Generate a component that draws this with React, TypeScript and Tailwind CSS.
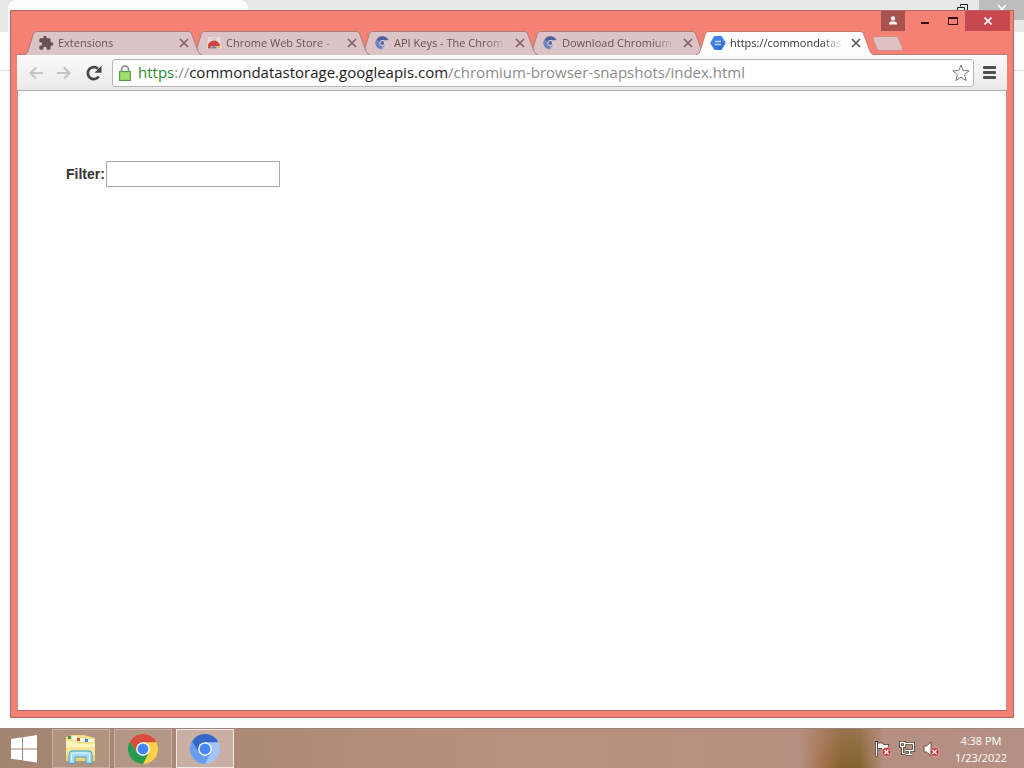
import { useState, type ReactNode } from 'react';
import { MdExtension } from 'react-icons/md';

type Tab = { title: string; icon: ReactNode };

function ExtensionIcon() {
  return <MdExtension size={16} className="text-[#695153]" />;
}

function StoreIcon() {
  return (
    <svg width="16" height="16" viewBox="0 0 16 16" aria-hidden="true">
      <path d="M2 2h12l1 12H1z" fill="#e8dcdc" />
      <path d="M5.500 3.500h5" stroke="#d2c2c3" strokeWidth="1.500" />
      <path d="M2 12a6 6 0 0 1 12-1L8 11z" fill="#d0443f" />
      <path d="M2 13.500q-.3-2.500.8-4L6 13.500z" fill="#c8503f" />
      <path d="M10 11h4v2.500h-4z" fill="#e9b94b" />
      <path d="M5.500 13.500a2.500 2.500 0 0 1 5 0z" fill="#5c7fd0" />
    </svg>
  );
}

function ChromiumTabIcon() {
  return (
    <svg width="16" height="16" viewBox="0 0 16 16" aria-hidden="true">
      <circle cx="8" cy="8" r="6.500" fill="#a9acd0" />
      <path d="M2.500 4.500A6.800 6.800 0 0 1 14.500 5H8.500a3 3 0 0 0-3 2.500z" fill="#535f9c" />
      <path d="M2.100 5A6.700 6.700 0 0 0 7 14.600L9 11a3 3 0 0 1-3.700-3z" fill="#7582b8" />
      <path d="M11 6h4.500v5.500l-4.500 3.500-1.500-.5 1.500-4z" fill="#dcc8cc" />
      <circle cx="8.200" cy="8" r="2.500" fill="#5d6cae" stroke="#dcd0dc" />
    </svg>
  );
}

function StorageIcon() {
  return (
    <svg width="16" height="16" viewBox="0 0 16 16" aria-hidden="true">
      <path d="M4.500 1.500h7L15.300 8l-3.800 6.500h-7L.7 8z" fill="#3f80ec" stroke="#3f80ec" strokeLinejoin="round" />
      <path d="M11 6 14 9l-3 5.500H8l-3-4z" fill="#356fd3" />
      <path d="M5 6.500h6M5 9.500h6" stroke="#c5dafd" strokeWidth="1.500" />
    </svg>
  );
}

const tabs: Tab[] = [
  { title: 'Extensions', icon: <ExtensionIcon /> },
  { title: 'Chrome Web Store -', icon: <StoreIcon /> },
  { title: 'API Keys - The Chrom', icon: <ChromiumTabIcon /> },
  { title: 'Download Chromium', icon: <ChromiumTabIcon /> },
  { title: 'https://commondatas', icon: <StorageIcon /> },
];

const stacking = ['z-[5]', 'z-[4]', 'z-[3]', 'z-[2]', 'z-[1]'];

function TabStrip() {
  const [active, setActive] = useState(4);

  return (
    <div className="relative flex h-6 pl-[13px]">
      {tabs.map((tab, index) => {
        const isActive = index === active;
        return (
          <div
            key={tab.title}
            className={`relative -mr-[10px] flex h-6 w-[178px] shrink-0 items-center pr-[10px] pl-3 ${
              isActive ? 'z-10' : stacking[index]
            }`}
          >
            <svg
              className="absolute inset-0 h-full w-full"
              viewBox="0 0 178 24"
              preserveAspectRatio="none"
              aria-hidden="true"
            >
              <path
                d="M0 24C3 23 3 22 4 20L9 4C10 1 11 .5 13 .5H164C166 .5 167 1 168 4L174 20C175 22 175 23 178 24Z"
                fill={isActive ? '#fdfdfd' : '#dcc3c5'}
              />
              <path
                d="M0 23.500C3 23 3 22 4 20L9 4C10 1 11 .5 13 .5H164C166 .5 167 1 168 4L174 20C175 22 175 23 178 23.500"
                fill="none"
                stroke={isActive ? '#c87469' : '#ab7d7b'}
              />
            </svg>
            <button
              type="button"
              onClick={() => setActive(index)}
              className="relative flex min-w-0 flex-1 items-center gap-1 pl-0.5"
            >
              {tab.icon}
              <span
                className={`min-w-0 flex-1 text-left text-[11px] leading-4 whitespace-nowrap [mask-image:linear-gradient(to_right,black_80%,transparent)] ${
                  isActive ? 'text-[#333]' : 'text-[#695153]'
                }`}
              >
                {tab.title}
              </span>
            </button>
            <button
              type="button"
              aria-label={`Close ${tab.title}`}
              className="relative ml-1 flex h-4 w-4 items-center justify-center"
            >
              <svg width="10" height="10" viewBox="0 0 10 10" aria-hidden="true">
                <path d="m1 1 8 8M9 1 1 9" stroke={isActive ? '#555' : '#806365'} strokeWidth="1.600" />
              </svg>
            </button>
          </div>
        );
      })}
      {/* New tab */}
      <button type="button" aria-label="New tab" className="ml-2 h-6 w-8">
        <svg width="32" height="24" viewBox="0 0 32 24" aria-hidden="true">
          <path
            d="M3 5.500H24c2 0 2.500 1 3 2.500l3.500 9c.6 2-.2 2.500-2 2.500H8c-2 0-3-1-3.500-2.500L1 8c-.5-1.500.3-2.500 2-2.500z"
            fill="#dcc1c0"
            stroke="#d98a81"
          />
        </svg>
      </button>
      <div className="absolute inset-x-1 bottom-0 h-px bg-[#b97a73]" />
    </div>
  );
}

function WindowControls() {
  return (
    <div className="flex h-5 justify-end pr-[3px]">
      <button type="button" aria-label="Profile" className="flex w-6 items-center justify-center bg-[#a95350]">
        <svg width="10" height="10" viewBox="0 0 10 10" fill="#fff5ea" aria-hidden="true">
          <circle cx="5" cy="2.500" r="2.200" />
          <path d="M1 8.500V7.500Q1 6 3 5.500h4q2 .5 2 2v1z" />
        </svg>
      </button>
      <button type="button" aria-label="Minimize" className="ml-1 flex w-8 items-center justify-center">
        <span className="mt-1 h-[2px] w-2 bg-[#34100e]" />
      </button>
      <button type="button" aria-label="Maximize" className="flex w-6 items-center justify-center">
        <span className="h-2 w-[10px] border border-t-2 border-[#34100e]" />
      </button>
      <button type="button" aria-label="Close" className="flex w-[45px] items-center justify-center bg-[#c84850]">
        <svg width="8" height="8" viewBox="0 0 8 8" aria-hidden="true">
          <path d="m.5.5 7 7M7.500.5l-7 7" stroke="#fff" strokeWidth="1.600" />
        </svg>
      </button>
    </div>
  );
}

function Toolbar() {
  return (
    <div className="flex h-9 items-center border-b border-[#adadad] bg-gradient-to-b from-[#fbfbfb] to-[#e9e9e9] px-[10px]">
      <button type="button" aria-label="Back" className="flex h-6 w-[18px] items-center justify-center">
        <svg width="16" height="14" viewBox="0 0 16 14" fill="none" stroke="#c5c5c5" strokeWidth="2.200" aria-hidden="true">
          <path d="M8 1.500 2.500 7 8 12.500M2.500 7H15" />
        </svg>
      </button>
      <button type="button" aria-label="Forward" className="ml-[10px] flex h-6 w-[18px] items-center justify-center">
        <svg width="16" height="14" viewBox="0 0 16 14" fill="none" stroke="#c5c5c5" strokeWidth="2.200" aria-hidden="true">
          <path d="M8 1.500 13.500 7 8 12.500M13.500 7H1" />
        </svg>
      </button>
      <button type="button" aria-label="Reload" className="ml-3 flex h-6 w-[18px] items-center justify-center">
        <svg width="16" height="16" viewBox="0 0 16 16" aria-hidden="true">
          <path d="M12.800 11.500A6 6 0 1 1 12 3.800" fill="none" stroke="#444" strokeWidth="2.600" />
          <path d="M15.500.8v7H8.600z" fill="#444" />
        </svg>
      </button>
      <div className="ml-[9px] flex h-7 min-w-0 flex-1 items-center rounded-[3px] border border-[#b5b5b5] bg-white pr-[3px] pl-[6px]">
        <svg width="12" height="16" viewBox="0 0 12 16" className="shrink-0" aria-hidden="true">
          <path d="M2.500 8V4.500a3.500 3.500 0 0 1 7 0V8" fill="none" stroke="#808780" strokeWidth="1.600" />
          <rect x=".5" y="6.500" width="11" height="9" fill="#8fd45f" stroke="#5a9c44" />
          <path d="M2 9h8M2 11h8M2 13h8" stroke="#b8ea91" strokeWidth=".8" />
        </svg>
        <div className="ml-[7px] min-w-0 flex-1 overflow-hidden pb-px text-[15px] leading-5 whitespace-nowrap text-[#8b8b8b]">
          <span className="text-[#2b8b2b]">https</span>://
          <span className="text-[#1d1d1d]">commondatastorage.googleapis.com</span>
          /chromium-browser-snapshots/index.html
        </div>
        <button type="button" aria-label="Bookmark this page" className="shrink-0">
          <svg width="18" height="18" viewBox="0 0 18 18" aria-hidden="true">
            <path
              d="m9 1 2.200 5.500 6 .4-4.600 3.800 1.500 5.800L9 13.300l-5.100 3.200 1.500-5.800L.8 6.900l6-.4z"
              fill="#fff"
              stroke="#777"
              strokeLinejoin="round"
            />
          </svg>
        </button>
      </div>
      <button type="button" aria-label="Menu" className="ml-[7px] flex h-6 w-4 flex-col items-center justify-center gap-[2px]">
        <span className="h-[3px] w-[13px] rounded-[1px] bg-[#505050]" />
        <span className="h-[3px] w-[13px] rounded-[1px] bg-[#505050]" />
        <span className="h-[3px] w-[13px] rounded-[1px] bg-[#505050]" />
      </button>
    </div>
  );
}

function BrowserWindow() {
  const [filter, setFilter] = useState('');

  return (
    <div className="relative flex flex-1 flex-col border border-[#ad6660] bg-[#f58175]">
      <WindowControls />
      <TabStrip />
      <div className="mx-[6px] mb-[6px] flex flex-1 flex-col border-b border-[#a9665f] bg-white">
        <Toolbar />
        <main className="flex-1 border-x border-[#c98d86] px-12 pt-[70px]">
          <form className="flex items-center gap-px" onSubmit={(e) => e.preventDefault()}>
            <label
              htmlFor="filter"
              className="font-['Liberation_Sans',Arial,sans-serif] text-[14px] leading-5 font-bold text-[#333]"
            >
              Filter:
            </label>
            <input
              id="filter"
              type="text"
              value={filter}
              onChange={(e) => setFilter(e.target.value)}
              className="h-[26px] w-[174px] border border-[#a9a9a9] bg-white px-1 text-[14px] outline-none"
            />
          </form>
        </main>
      </div>
    </div>
  );
}

// Maximized window that shows around the edges of the front one
function BackWindow() {
  return (
    <div className="absolute inset-0 bg-[#fefefe]" aria-hidden="true">
      <div className="flex h-[71px] flex-col border-b border-[#dedede]">
        <div className="flex h-8 bg-[#e8e8e8]">
          <div className="ml-2 w-60 rounded-t-lg bg-[#fdfdfd]" />
          <div className="flex flex-1 justify-end">
            <svg width="12" height="12" viewBox="0 0 12 12" className="mt-1 mr-[10px]" fill="none" stroke="#222">
              <path d="M3.500 2.500v-2h7v8h-2M.5 3.500h7v7h-7z" />
            </svg>
            <div className="flex h-5 w-[45px] justify-center bg-[#bdbdbd] pt-1">
              <svg width="10" height="10" viewBox="0 0 10 10">
                <path d="m1 1 8 8M9 1 1 9" stroke="#fff" strokeWidth="1.600" />
              </svg>
            </div>
          </div>
        </div>
      </div>
    </div>
  );
}

function StartIcon() {
  return (
    <svg width="28" height="28" viewBox="0 0 28 28" fill="#fff" aria-hidden="true">
      <path d="M1 4 12 2.300v11.200H1zM13 2.200 27 0v13.500H13zM1 14.500h11v10.800L1 23.800zM13 14.500h14v13l-14-2.100z" />
    </svg>
  );
}

function ExplorerIcon() {
  return (
    <svg width="34" height="32" viewBox="0 0 34 32" aria-hidden="true">
      <path d="M2 4 8 2h12l11 3v5H2z" fill="#f0dd8c" />
      <path d="M4 3h3v3H4z" fill="#3c9a45" />
      <path d="M8 3h5v4H8z" fill="#f8f6e6" />
      <path d="M13 5h3v3h-3z" fill="#d0523c" />
      <path d="M16 5h5v4h-5z" fill="#f8f6e6" />
      <path d="M21 6h3v3h-3z" fill="#4488c4" />
      <path d="M24 6h6v3h-6z" fill="#f8f6e6" />
      <path d="M2 7h9l3 3h17v18H2z" fill="#f6e795" />
      <path d="M2 8h9l3 3h17v3H2z" fill="#fdf5bd" />
      <path d="M2 22h29v6H2z" fill="#ebd675" />
      <path
        d="M5 30.500V21q0-3 3-3h17q3 0 3 3v9.500h-6V24H11v6.500z"
        fill="#a5dcf0"
        stroke="#4a9fc9"
      />
      <path d="M7.500 28v-6q0-2 2-2h14q2 0 2 2v6" fill="none" stroke="#e4f8ff" />
    </svg>
  );
}

type BallProps = { top: string; left: string; right: string };

function ChromeBall({ top, left, right }: BallProps) {
  return (
    <svg width="30" height="30" viewBox="0 0 48 48" aria-hidden="true">
      <circle cx="24" cy="24" r="24" fill={right} />
      <path d="M3.200 12 14.500 29.500h19L24 48A24 24 0 0 1 3.200 12z" fill={left} />
      <path d="M3.200 12A24 24 0 0 1 45.300 13H24v16.500h-9.500z" fill={top} />
      <circle cx="24" cy="24" r="11" fill="#fff" />
      <circle cx="24" cy="24" r="8.700" fill="#4285f4" />
    </svg>
  );
}

function ErrorBadge() {
  return (
    <>
      <circle cx="11.500" cy="11" r="4.500" fill="#cc3b42" stroke="#f0c9c4" strokeWidth=".6" />
      <path d="m9.500 9 4 4M13.500 9l-4 4" stroke="#fff" strokeWidth="1.500" />
    </>
  );
}

function Tray() {
  return (
    <div className="flex items-center gap-2">
      <button type="button" aria-label="Action Center">
        <svg width="16" height="16" viewBox="0 0 16 16" aria-hidden="true">
          <path d="M1.500 0v15.500" stroke="#4a3530" strokeWidth="3" />
          <path d="M1.500 1v14" stroke="#fff" strokeWidth="1.400" />
          <path d="M2.500 2h5l1 1.500H14l-1 2.500 1 2.500H8l-1-1H2.500z" fill="#fff" stroke="#4a3530" strokeWidth=".8" />
          <ErrorBadge />
        </svg>
      </button>
      <button type="button" aria-label="Network">
        <svg width="16" height="16" viewBox="0 0 16 16" fill="none" aria-hidden="true">
          <g stroke="#4a3530" strokeWidth="3">
            <path d="M6 2.500h8.500v7H6M10.500 10v3M6.500 13.500h7M1.500 1.500h4v4h-4zM3.500 6v6.500h2" />
          </g>
          <g stroke="#fff" strokeWidth="1.300">
            <path d="M6 2.500h8.500v7H6M10.500 10v3M6.500 13.500h7M1.500 1.500h4v4h-4zM3.500 6v6.500h2" />
          </g>
        </svg>
      </button>
      <button type="button" aria-label="Volume">
        <svg width="16" height="16" viewBox="0 0 16 16" aria-hidden="true">
          <path d="M1 5h2.500L8 1v14l-4.500-4H1z" fill="#fff" stroke="#4a3530" strokeWidth=".8" />
          <ErrorBadge />
        </svg>
      </button>
    </div>
  );
}

function Taskbar() {
  return (
    <footer className="relative flex h-10 items-center justify-between border-t border-[#9b8379] bg-gradient-to-r from-[#a28472] via-[#b8917f] to-[#b48f83]">
      {/* Wallpaper glow behind the tray */}
      <div className="absolute inset-y-0 right-[140px] w-[84px] bg-[linear-gradient(to_right,transparent,#a67350_25%,#84622c_50%,#84622c_70%,transparent)] [mask-image:linear-gradient(to_bottom,rgba(0,0,0,0.6),black)]" />
      <nav className="relative flex h-full gap-1">
        <button type="button" aria-label="Start" className="flex w-12 items-center justify-center">
          <StartIcon />
        </button>
        <button
          type="button"
          aria-label="File Explorer"
          className="flex w-[58px] items-center justify-center border border-[#c9b0a4] bg-[#b1937f]"
        >
          <ExplorerIcon />
        </button>
        <button
          type="button"
          aria-label="Google Chrome"
          className="flex w-[58px] items-center justify-center border border-[#c9b0a4] bg-[#b39686]"
        >
          <ChromeBall top="#d94b3e" left="#279a54" right="#fbcf48" />
        </button>
        <button
          type="button"
          aria-label="Chromium"
          className="flex w-[58px] items-center justify-center border border-[#f3e9e4] bg-[#c9afa2]"
        >
          <ChromeBall top="#3767c9" left="#669df1" right="#a5c5f8" />
        </button>
      </nav>
      <div className="relative flex items-center gap-4 pr-[17px]">
        <Tray />
        <div className="text-center text-[11px] leading-[17px] text-white">
          <div>4:38 PM</div>
          <div>1/23/2022</div>
        </div>
      </div>
    </footer>
  );
}

export default function App() {
  return (
    <div className="relative flex min-h-screen flex-col font-['Open_Sans','Noto_Sans',sans-serif]">
      <BackWindow />
      <div className="relative flex flex-1 flex-col p-[10px]">
        <BrowserWindow />
      </div>
      <Taskbar />
    </div>
  );
}
